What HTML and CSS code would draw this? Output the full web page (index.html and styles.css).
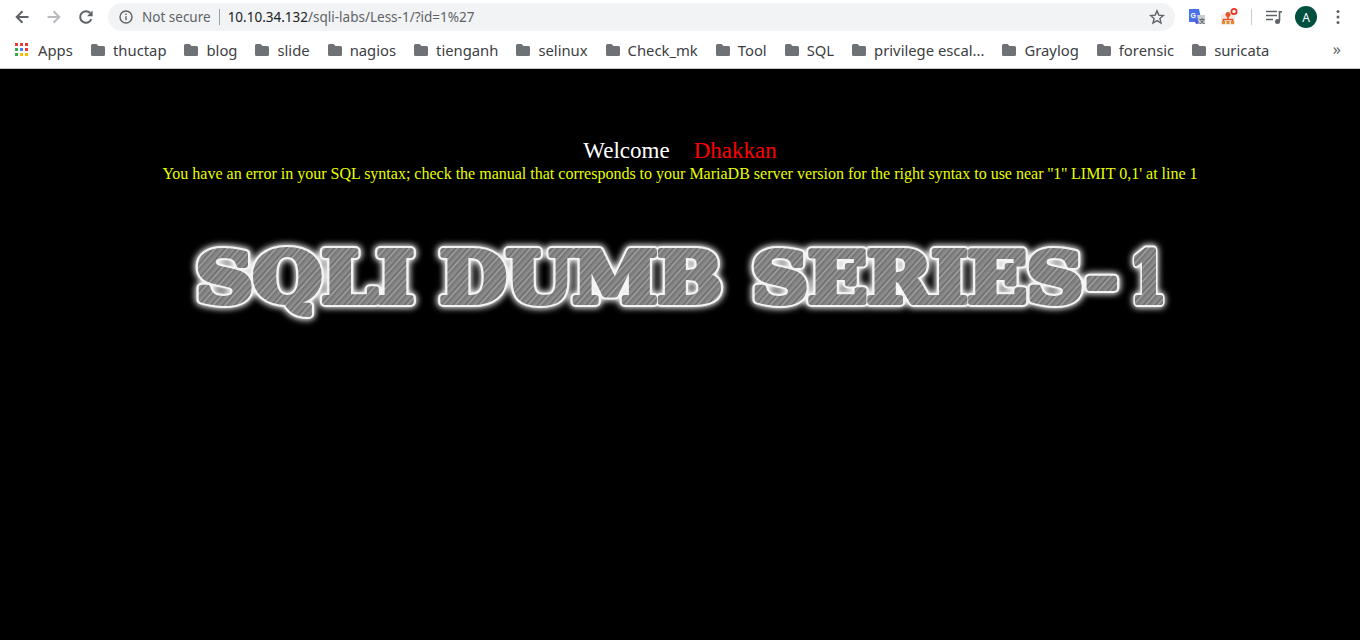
FILE: index.html
```html
<!DOCTYPE html>
<html lang="en">
<head>
<meta charset="utf-8">
<title>Less-1</title>
<link rel="stylesheet" href="styles.css">
</head>
<body>
<header class="chrome">
  <div class="toolbar">
    <svg class="nav" viewBox="0 0 16 16"><path d="M14.5 8H3M8.5 2.2 2.7 8l5.8 5.8" fill="none" stroke="#5f6368" stroke-width="2"/></svg>
    <svg class="nav" viewBox="0 0 16 16"><path d="M1.5 8H13M7.5 2.2 13.3 8l-5.8 5.8" fill="none" stroke="#b8babd" stroke-width="2"/></svg>
    <svg class="nav" viewBox="0 0 16 16"><path d="M13.3 10.2A5.8 5.8 0 1 1 12.2 4" fill="none" stroke="#5f6368" stroke-width="2"/><path d="M14.6 1.6v5.6H9z" fill="#5f6368"/></svg>
    <div class="omnibox">
      <svg class="info" viewBox="0 0 16 16"><circle cx="8" cy="8" r="6" fill="none" stroke="#5f6368" stroke-width="1.4"/><path d="M7.3 7.2h1.4v4H7.3zM7.3 4.6h1.4V6H7.3z" fill="#5f6368"/></svg>
      <span class="secure">Not secure</span>
      <span class="sep"></span>
      <span class="url"><b>10.10.34.132</b>/sqli-labs/Less-1/?id=1%27</span>
      <svg class="star" viewBox="0 0 16 16"><path d="m8 1.9 1.8 4.2 4.6.4-3.5 3 1.1 4.5-4-2.4-4 2.4 1.1-4.5-3.5-3 4.6-.4z" fill="none" stroke="#5f6368" stroke-width="1.4"/></svg>
    </div>
    <svg class="ext" viewBox="0 0 18 18"><path d="M1 1h10l3 14-6 1-1-2H1z" fill="#4a72e8"/><path d="M9 7h8v9l-6 0z" fill="#c9ccd1"/><path d="M6 11l3 5 1-2z" fill="#6a3fc0"/><text x="2.5" y="9.5" class="ext-g">G</text><text x="11" y="14.5" class="ext-x">文</text></svg>
    <svg class="ext ext2" viewBox="0 0 18 18"><rect x="1" y="6" width="14" height="11" rx="1" fill="#f4e9e2"/><circle cx="8" cy="6.5" r="2.5" fill="#e2552b"/><path d="M8 8v3M3.5 15v-3.5h9V15" fill="none" stroke="#e2552b" stroke-width="1.6"/><rect x="2" y="13" width="3" height="3" fill="#e8872b"/><rect x="6.500" y="13" width="3" height="3" fill="#e8872b"/><rect x="11" y="13" width="3" height="3" fill="#e8872b"/><circle cx="14" cy="3.500" r="2.600" fill="#fff" stroke="#e8321f" stroke-width="1.800"/></svg>
    <span class="divider"></span>
    <svg class="media" viewBox="0 0 18 18"><path d="M1 3.500h11M1 7.500h11M1 11.500h7" stroke="#5f6368" stroke-width="1.600" fill="none"/><path d="M14.500 3v10" stroke="#5f6368" stroke-width="1.600"/><path d="M14 3h3v1.600h-3z" fill="#5f6368"/><circle cx="12.500" cy="13.500" r="2.500" fill="#5f6368"/></svg>
    <span class="avatar">A</span>
    <svg class="menu" viewBox="0 0 4 16"><circle cx="2" cy="2.500" r="1.500"/><circle cx="2" cy="8" r="1.500"/><circle cx="2" cy="13.500" r="1.500"/></svg>
  </div>
  <nav class="bookmarks">
    <span class="apps">
      <svg class="apps-icon" viewBox="0 0 14 14"><rect x="0" y="0" width="3" height="3" fill="#e53935"/><rect x="5" y="0" width="3" height="3" fill="#e53935"/><rect x="10" y="0" width="3" height="3" fill="#e53935"/><rect x="0" y="5" width="3" height="3" fill="#34a853"/><rect x="5" y="5" width="3" height="3" fill="#4285f4"/><rect x="10" y="5" width="3" height="3" fill="#e53935"/><rect x="0" y="10" width="3" height="3" fill="#34a853"/><rect x="5" y="10" width="3" height="3" fill="#fbbc05"/><rect x="10" y="10" width="3" height="3" fill="#fbbc05"/></svg>
      Apps
    </span>
    <div class="marks">
      <span class="mark"><svg viewBox="0 0 16 14"><path d="M2.500 1h4l2 2h5a1.500 1.500 0 0 1 1.500 1.500v7a1.500 1.500 0 0 1-1.500 1.500h-11A1.500 1.500 0 0 1 1 11.500v-9A1.500 1.500 0 0 1 2.500 1z"/></svg>thuctap</span>
      <span class="mark"><svg viewBox="0 0 16 14"><path d="M2.500 1h4l2 2h5a1.500 1.500 0 0 1 1.500 1.500v7a1.500 1.500 0 0 1-1.500 1.500h-11A1.500 1.500 0 0 1 1 11.500v-9A1.500 1.500 0 0 1 2.500 1z"/></svg>blog</span>
      <span class="mark"><svg viewBox="0 0 16 14"><path d="M2.500 1h4l2 2h5a1.500 1.500 0 0 1 1.500 1.500v7a1.500 1.500 0 0 1-1.500 1.500h-11A1.500 1.500 0 0 1 1 11.500v-9A1.500 1.500 0 0 1 2.500 1z"/></svg>slide</span>
      <span class="mark"><svg viewBox="0 0 16 14"><path d="M2.500 1h4l2 2h5a1.500 1.500 0 0 1 1.500 1.500v7a1.500 1.500 0 0 1-1.500 1.500h-11A1.500 1.500 0 0 1 1 11.500v-9A1.500 1.500 0 0 1 2.500 1z"/></svg>nagios</span>
      <span class="mark"><svg viewBox="0 0 16 14"><path d="M2.500 1h4l2 2h5a1.500 1.500 0 0 1 1.500 1.500v7a1.500 1.500 0 0 1-1.500 1.500h-11A1.500 1.500 0 0 1 1 11.500v-9A1.500 1.500 0 0 1 2.500 1z"/></svg>tienganh</span>
      <span class="mark"><svg viewBox="0 0 16 14"><path d="M2.500 1h4l2 2h5a1.500 1.500 0 0 1 1.500 1.500v7a1.500 1.500 0 0 1-1.500 1.500h-11A1.500 1.500 0 0 1 1 11.500v-9A1.500 1.500 0 0 1 2.500 1z"/></svg>selinux</span>
      <span class="mark"><svg viewBox="0 0 16 14"><path d="M2.500 1h4l2 2h5a1.500 1.500 0 0 1 1.500 1.500v7a1.500 1.500 0 0 1-1.500 1.500h-11A1.500 1.500 0 0 1 1 11.500v-9A1.500 1.500 0 0 1 2.500 1z"/></svg>Check_mk</span>
      <span class="mark"><svg viewBox="0 0 16 14"><path d="M2.500 1h4l2 2h5a1.500 1.500 0 0 1 1.500 1.500v7a1.500 1.500 0 0 1-1.500 1.500h-11A1.500 1.500 0 0 1 1 11.500v-9A1.500 1.500 0 0 1 2.500 1z"/></svg>Tool</span>
      <span class="mark"><svg viewBox="0 0 16 14"><path d="M2.500 1h4l2 2h5a1.500 1.500 0 0 1 1.500 1.500v7a1.500 1.500 0 0 1-1.500 1.500h-11A1.500 1.500 0 0 1 1 11.500v-9A1.500 1.500 0 0 1 2.500 1z"/></svg>SQL</span>
      <span class="mark"><svg viewBox="0 0 16 14"><path d="M2.500 1h4l2 2h5a1.500 1.500 0 0 1 1.500 1.500v7a1.500 1.500 0 0 1-1.500 1.500h-11A1.500 1.500 0 0 1 1 11.500v-9A1.500 1.500 0 0 1 2.500 1z"/></svg>privilege escal...</span>
      <span class="mark"><svg viewBox="0 0 16 14"><path d="M2.500 1h4l2 2h5a1.500 1.500 0 0 1 1.500 1.500v7a1.500 1.500 0 0 1-1.500 1.500h-11A1.500 1.500 0 0 1 1 11.500v-9A1.500 1.500 0 0 1 2.500 1z"/></svg>Graylog</span>
      <span class="mark"><svg viewBox="0 0 16 14"><path d="M2.500 1h4l2 2h5a1.500 1.500 0 0 1 1.500 1.500v7a1.500 1.500 0 0 1-1.500 1.500h-11A1.500 1.500 0 0 1 1 11.500v-9A1.500 1.500 0 0 1 2.500 1z"/></svg>forensic</span>
      <span class="mark"><svg viewBox="0 0 16 14"><path d="M2.500 1h4l2 2h5a1.500 1.500 0 0 1 1.500 1.500v7a1.500 1.500 0 0 1-1.500 1.500h-11A1.500 1.500 0 0 1 1 11.500v-9A1.500 1.500 0 0 1 2.500 1z"/></svg>suricata</span>
    </div>
    <span class="more">»</span>
  </nav>
</header>
<main class="page">
  <div class="welcome">Welcome<span class="gap"></span><span class="name">Dhakkan</span></div>
  <div class="error">You have an error in your SQL syntax; check the manual that corresponds to your MariaDB server version for the right syntax to use near ''1'' LIMIT 0,1' at line 1</div>
  <svg class="logo" viewBox="0 0 1000 100" aria-label="SQLI DUMB SERIES-1">
    <defs>
      <pattern id="scratch" width="9" height="9" patternUnits="userSpaceOnUse" patternTransform="rotate(-48)">
        <rect width="9" height="9" fill="#838383"/>
        <path d="M0 1.500h9" stroke="#a2a2a2" stroke-width="1"/>
        <path d="M0 3.500h9" stroke="#727272" stroke-width="1"/>
        <path d="M0 6.500h9" stroke="#929292" stroke-width="1"/>
        <path d="M0 8.500h9" stroke="#6c6c6c" stroke-width="1"/>
      </pattern>
      <filter id="glow" x="-5%" y="-30%" width="110%" height="160%">
        <feGaussianBlur stdDeviation="3"/>
      </filter>
      <g id="words" class="logo-text">
        <text x="16" y="70" textLength="218" lengthAdjust="spacingAndGlyphs">SQLI</text>
        <text x="260" y="70" textLength="282" lengthAdjust="spacingAndGlyphs">DUMB</text>
        <text x="572" y="70" textLength="366" lengthAdjust="spacingAndGlyphs">SERIES-</text>
        <text x="950" y="70" textLength="36" lengthAdjust="spacingAndGlyphs">1</text>
      </g>
    </defs>
    <use href="#words" class="logo-glow" filter="url(#glow)"/>
    <use href="#words" class="logo-edge"/>
    <use href="#words" class="logo-face"/>
  </svg>
</main>
</body>
</html>
```
FILE: styles.css
```css
* { box-sizing: border-box; }
html, body { margin: 0; height: 100%; overflow: hidden; }
body { display: flex; flex-direction: column; background: #000; }

.chrome { background: #fff; height: 69px; font-family: "Noto Sans", sans-serif; flex: none; border-bottom: 1px solid #c4c6c9; }
.toolbar { height: 34px; display: flex; align-items: center; padding-left: 14px; }
.nav { width: 16px; height: 16px; margin-right: 16px; flex: none; }
.omnibox { width: 1067px; height: 28px; margin-left: -2px; border-radius: 14px; background: #f1f3f4; display: flex; align-items: center; padding: 0 10px; flex: none; font-size: 14px; }
.info { width: 16px; height: 16px; flex: none; }
.secure { color: #5f6368; margin-left: 8px; font-size: 13.500px; }
.sep { width: 1px; height: 16px; background: #9aa0a6; margin: 0 8px; }
.url { color: #5f6368; flex: 1; font-size: 13.500px; }
.url b { color: #202124; font-weight: 400; }
.star { width: 16px; height: 16px; flex: none; }
.ext { width: 18px; height: 18px; margin-left: 13px; flex: none; }
.ext2 { margin-left: 14px; }
.ext-g { font: 700 7px "Liberation Sans", sans-serif; fill: #fff; }
.ext-x { font: 700 6px "Noto Sans CJK SC", sans-serif; fill: #5f6368; }
.divider { width: 1px; height: 16px; background: #c9cbcf; margin: 0 13px; flex: none; }
.media { width: 18px; height: 18px; flex: none; }
.avatar { width: 22px; height: 22px; border-radius: 50%; background: #00503f; color: #fff; font-size: 12px; display: flex; align-items: center; justify-content: center; margin-left: 12px; flex: none; }
.menu { width: 4px; height: 16px; margin-left: 19px; fill: #5f6368; flex: none; }

.bookmarks { height: 32px; display: flex; align-items: center; padding-left: 15px; font-size: 14.800px; color: #3c4043; position: relative; }
.apps { display: flex; align-items: center; gap: 9px; width: 75px; flex: none; }
.apps-icon { width: 14px; height: 14px; flex: none; }
.marks { display: flex; align-items: center; gap: 17px; flex: none; }
.mark { display: flex; align-items: center; gap: 7px; white-space: nowrap; }
.mark svg { width: 16px; height: 14px; fill: #6e7175; flex: none; }
.more { position: absolute; right: 19px; top: 4px; font-size: 16px; color: #5f6368; }

.page { flex: 1; background: #000; text-align: center; font-family: "Liberation Serif", serif; padding-top: 68px; }
.welcome { font-size: 23px; line-height: 28px; color: #fff; }
.gap { display: inline-block; width: 24px; }
.name { color: #f00; }
.error { font-size: 16px; line-height: 18px; color: #e8ff00; }
.logo { display: block; width: 1000px; height: 100px; margin: 49px auto 0; }
.logo-text { font-family: "DejaVu Serif", serif; font-weight: 700; font-size: 70px; stroke-linejoin: round; }
.logo-glow { fill: #fff; stroke: #fff; stroke-width: 12px; }
.logo-edge { fill: #f4f4f4; stroke: #f4f4f4; stroke-width: 10px; }
.logo-face { fill: url(#scratch); stroke: url(#scratch); stroke-width: 6px; }
```
